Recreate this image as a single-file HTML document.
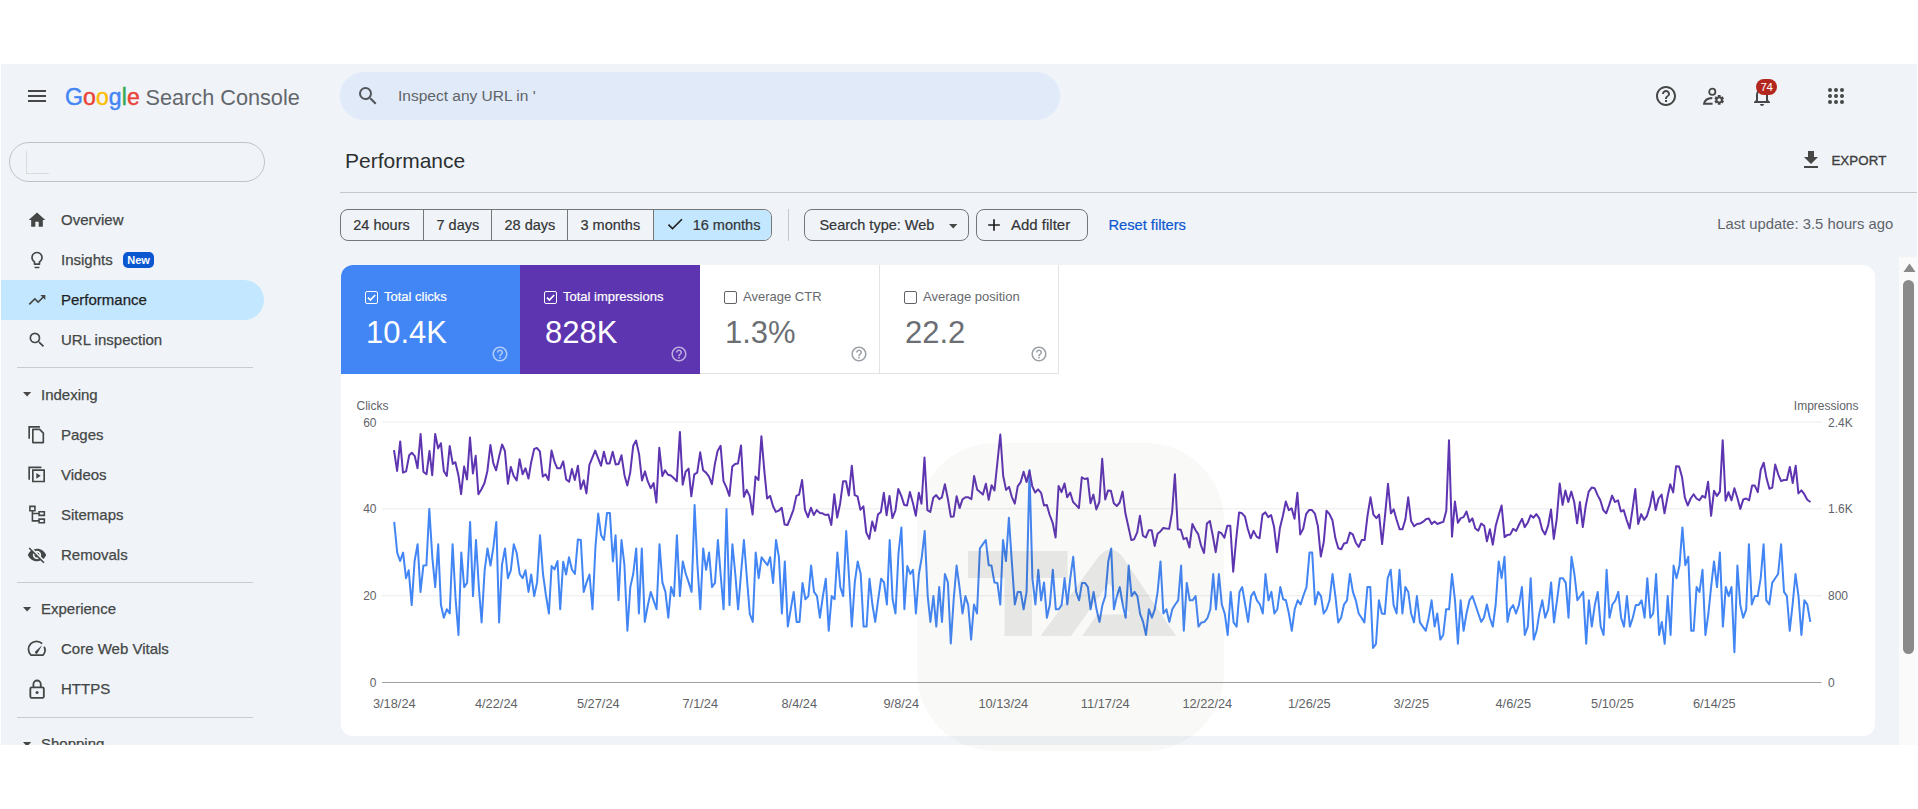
<!DOCTYPE html>
<html><head><meta charset="utf-8">
<style>
*{margin:0;padding:0;box-sizing:border-box}
html,body{width:1918px;height:809px;overflow:hidden;background:#fff;font-family:"Liberation Sans",sans-serif}
#app{position:absolute;left:1px;top:64px;width:1916px;height:681px;background:#f0f4f9;overflow:hidden}
.a{position:absolute;white-space:nowrap}
svg{position:absolute;overflow:visible}
.nav{position:absolute;left:0;height:40px;width:263px;font-size:15px;font-weight:400;color:#444746;line-height:40px;-webkit-text-stroke:0.25px #444746}
.nav .t{position:absolute;left:60px;top:0}
.nav svg{left:26px;top:10px;width:20px;height:20px}
.sec{position:absolute;left:0;height:40px;font-size:15px;font-weight:400;color:#444746;line-height:40px;-webkit-text-stroke:0.25px #444746}
.divd{position:absolute;left:16px;width:236px;height:1px;background:#c9cccd}
.seg{position:absolute;top:145px;height:32px;border:1px solid #747775;border-radius:8px;overflow:hidden;background:#f0f4f9}
.btn{position:absolute;top:145px;height:32px;border:1px solid #747775;border-radius:8px}
.tile{position:absolute;top:201px;height:109px}
.tile .lab{position:absolute;left:43px;top:24px;font-size:13px;line-height:16px;-webkit-text-stroke:0.2px currentColor}
.tile .val{position:absolute;left:25px;top:49.5px;font-size:31px;line-height:36px}
.tile .cb{position:absolute;left:24px;top:26px;width:13px;height:13px;border-radius:2px}
</style></head>
<body>
<div id="app">
  <!-- header -->
  <svg style="left:27px;top:26px" width="18" height="12"><rect x="0" y="0" width="18" height="2" fill="#474747"/><rect x="0" y="5" width="18" height="2" fill="#474747"/><rect x="0" y="10" width="18" height="2" fill="#474747"/></svg>
  <div class="a" style="left:64px;top:18px;font-size:23px;line-height:30px;letter-spacing:0.1px;-webkit-text-stroke:0.45px"><span style="color:#4285f4">G</span><span style="color:#ea4335">o</span><span style="color:#fbbc05">o</span><span style="color:#4285f4">g</span><span style="color:#34a853">l</span><span style="color:#ea4335">e</span></div>
  <div class="a" style="left:144.5px;top:19px;font-size:21.7px;line-height:30px;color:#63676b">Search Console</div>

  <div class="a" style="left:339px;top:8px;width:720px;height:48px;border-radius:24px;background:#e0eaf8"></div>
  <svg style="left:355px;top:20px" width="24" height="24" viewBox="0 0 24 24"><path fill="#53575b" d="M15.5 14h-.79l-.28-.27A6.471 6.471 0 0 0 16 9.5 6.5 6.5 0 1 0 9.5 16c1.61 0 3.09-.59 4.23-1.57l.27.28v.79l5 4.99L20.49 19l-4.99-5zm-6 0C7.01 14 5 11.99 5 9.5S7.01 5 9.5 5 14 7.01 14 9.5 11.99 14 9.5 14z"/></svg>
  <div class="a" style="left:397px;top:22px;font-size:15.5px;line-height:20px;color:#5f6368">Inspect any URL in '</div>

  <!-- right header icons -->
  <svg style="left:1653px;top:20px" width="24" height="24" viewBox="0 0 24 24"><path fill="#474747" d="M11 18h2v-2h-2v2zm1-16C6.48 2 2 6.48 2 12s4.48 10 10 10 10-4.48 10-10S17.52 2 12 2zm0 18c-4.41 0-8-3.590-8-8s3.59-8 8-8 8 3.59 8 8-3.59 8-8 8zm0-14c-2.21 0-4 1.79-4 4h2c0-1.1.9-2 2-2s2 .9 2 2c0 2-3 1.75-3 5h2c0-2.25 3-2.5 3-5 0-2.21-1.79-4-4-4z"/></svg>
  <svg style="left:1699px;top:22px" width="26" height="24" viewBox="0 0 26 24"><circle cx="12.3" cy="5.8" r="3.1" fill="none" stroke="#474747" stroke-width="1.8"/><path d="M12.3 11.9C8 12.1 4.6 14 4.1 17.7H12.6" fill="none" stroke="#474747" stroke-width="2"/><path fill="#474747" fill-rule="evenodd" d="M17.82 9.09 L20.58 9.09 L20.64 10.49 L21.43 10.95 L22.67 10.30 L24.05 12.69 L22.87 13.44 L22.87 14.36 L24.05 15.11 L22.67 17.50 L21.43 16.85 L20.64 17.31 L20.58 18.71 L17.82 18.71 L17.76 17.31 L16.97 16.85 L15.73 17.50 L14.35 15.11 L15.53 14.36 L15.53 13.44 L14.35 12.69 L15.73 10.30 L16.97 10.95 L17.76 10.49Z M20.90 13.90 A1.7 1.7 0 1 0 17.50 13.90 A1.7 1.7 0 1 0 20.90 13.90Z"/></svg>
  <svg style="left:1749px;top:20px" width="24" height="24" viewBox="0 0 24 24"><path fill="#474747" d="M12 22c1.1 0 2-.9 2-2h-4c0 1.1.89 2 2 2zm6-6v-5c0-3.07-1.64-5.64-4.5-6.32V4c0-.83-.67-1.5-1.5-1.5s-1.5.67-1.5 1.5v.68C7.63 5.36 6 7.92 6 11v5l-2 2v1h16v-1l-2-2zm-2 1H8v-6c0-2.48 1.51-4.5 4-4.5s4 2.02 4 4.5v6z"/></svg>
  <div class="a" style="left:1755px;top:14.8px;width:21px;height:16.4px;border-radius:8.2px;background:#b3261e;color:#fff;font-size:11.5px;line-height:16.4px;text-align:center;letter-spacing:-0.3px">74</div>
  <svg style="left:1823px;top:20px" width="24" height="24" viewBox="0 0 24 24"><g fill="#444746"><circle cx="6" cy="6" r="2"/><circle cx="12" cy="6" r="2"/><circle cx="18" cy="6" r="2"/><circle cx="6" cy="12" r="2"/><circle cx="12" cy="12" r="2"/><circle cx="18" cy="12" r="2"/><circle cx="6" cy="18" r="2"/><circle cx="12" cy="18" r="2"/><circle cx="18" cy="18" r="2"/></g></svg>

  <!-- property selector -->
  <div class="a" style="left:8px;top:78px;width:256px;height:40px;border:1px solid #c0c3c2;border-radius:20px"></div>
  <div class="a" style="left:25px;top:86.5px;width:23px;height:23px;border-left:1px solid #dcdcdc;border-bottom:1px solid #dcdcdc"></div>

  <div class="nav" style="top:136.0px"><svg viewBox="0 0 24 24" fill="#444746"><path d="M10 20v-6h4v6h5v-8h3L12 3 2 12h3v8z"/></svg><span class="t">Overview</span></div>
  <div class="nav" style="top:175.6px"><svg viewBox="0 0 24 24" fill="#444746"><path d="M9 21c0 .55.45 1 1 1h4c.55 0 1-.45 1-1v-1H9v1zm3-19C8.14 2 5 5.14 5 9c0 2.38 1.19 4.47 3 5.74V17c0 .55.45 1 1 1h6c.55 0 1-.45 1-1v-2.26c1.81-1.27 3-3.36 3-5.74 0-3.86-3.14-7-7-7zm2.85 11.1l-.85.6V16h-4v-2.3l-.85-.6A4.997 4.997 0 0 1 7 9c0-2.76 2.24-5 5-5s5 2.24 5 5c0 1.63-.8 3.16-2.15 4.1z"/></svg><span class="t">Insights</span></div>
  <div class="a" style="left:122px;top:187.5px;width:31px;height:16.5px;border-radius:5px;background:#0b57d0;color:#fff;font-size:11px;font-weight:700;line-height:17px;text-align:center">New</div>
  <div class="a" style="left:0;top:216.0px;width:263px;height:40px;background:#c2e7ff;border-radius:0 20px 20px 0"></div>
  <div class="nav" style="top:216.0px"><svg viewBox="0 0 24 24" fill="#444746"><path d="M16 6l2.29 2.29-4.88 4.88-4-4L2 16.59 3.41 18l6-6 4 4 6.3-6.29L22 12V6z"/></svg><span class="t" style="color:#1f1f1f;-webkit-text-stroke-color:#1f1f1f">Performance</span></div>
  <div class="nav" style="top:256.0px"><svg viewBox="0 0 24 24" fill="#444746"><path d="M15.5 14h-.79l-.28-.27A6.471 6.471 0 0 0 16 9.5 6.5 6.5 0 1 0 9.5 16c1.61 0 3.09-.59 4.23-1.57l.27.28v.79l5 4.99L20.49 19l-4.99-5zm-6 0C7.01 14 5 11.99 5 9.5S7.01 5 9.5 5 14 7.01 14 9.5 11.99 14 9.5 14z"/></svg><span class="t">URL inspection</span></div>
  <div class="divd" style="top:303px"></div>
  <div class="sec" style="top:310.5px"><svg style="left:21.8px;top:17.5px" width="8" height="5"><path d="M0 0h8.2L4.1 4.6z" fill="#474747"/></svg><span style="position:absolute;left:40px">Indexing</span></div>
  <div class="nav" style="top:350.7px"><svg viewBox="0 0 24 24" fill="#444746"><path fill="none" stroke="#444746" stroke-width="2" d="M2.6 16.5V2.2H15.5"/><path fill="none" stroke="#444746" stroke-width="2" stroke-linejoin="round" d="M7 5.3H15.2L19.6 9.7V21.1H7Z"/></svg><span class="t">Pages</span></div>
  <div class="nav" style="top:390.8px"><svg viewBox="0 0 24 24" fill="#444746"><path fill="none" stroke="#444746" stroke-width="2" d="M2.6 17.8V2.9H17.3"/><path fill="none" stroke="#444746" stroke-width="2" d="M7 6.2H20.6V19.8H7Z"/><path d="M11.2 9.6v6.8l5.2-3.4z"/></svg><span class="t">Videos</span></div>
  <div class="nav" style="top:430.6px"><svg viewBox="0 0 24 24" fill="#444746"><path fill="none" stroke="#444746" stroke-width="1.9" d="M3.5 1.6h6v5.3h-6zM14.5 8.1h6.3v4.3h-6.3zM14.5 17h6.3v4.3h-6.3zM6.5 6.9V19.1h8M6.5 10.2h8"/></svg><span class="t">Sitemaps</span></div>
  <div class="nav" style="top:470.5px"><svg viewBox="0 0 24 24" fill="#444746"><path d="M12 7c2.76 0 5 2.24 5 5 0 .65-.13 1.26-.36 1.83l2.92 2.92c1.51-1.26 2.7-2.89 3.43-4.75-1.73-4.39-6-7.5-11-7.5-1.4 0-2.74.25-3.98.7l2.16 2.16C10.74 7.13 11.35 7 12 7zM2 4.27l2.28 2.28.46.46A11.804 11.804 0 0 0 1 12c1.73 4.39 6 7.5 11 7.5 1.55 0 3.03-.3 4.38-.84l.42.42L19.73 22 21 20.73 3.27 3 2 4.27zM7.53 9.8l1.55 1.55c-.05.21-.08.43-.08.65 0 1.66 1.34 3 3 3 .22 0 .44-.03.65-.08l1.55 1.55c-.67.33-1.41.53-2.2.53-2.76 0-5-2.24-5-5 0-.79.2-1.53.53-2.2zm4.31-.78l3.15 3.15.02-.16c0-1.66-1.34-3-3-3l-.17.01z"/></svg><span class="t">Removals</span></div>
  <div class="divd" style="top:518px"></div>
  <div class="sec" style="top:525.0px"><svg style="left:21.8px;top:17.5px" width="8" height="5"><path d="M0 0h8.2L4.1 4.6z" fill="#474747"/></svg><span style="position:absolute;left:40px">Experience</span></div>
  <div class="nav" style="top:565.4px"><svg viewBox="0 0 24 24" fill="#444746"><path fill="none" stroke="#444746" stroke-width="2.1" stroke-linejoin="round" d="M18.2 5.6A9 9 0 0 0 4.6 19.2H19.4A9 9 0 0 0 20.6 9.3"/><path d="M9.6 15.4l8.7-8.2-5.9 10.3a1.9 1.9 0 0 1-2.8-2.1z"/></svg><span class="t">Core Web Vitals</span></div>
  <div class="nav" style="top:605.0px"><svg viewBox="0 0 24 24" fill="#444746"><rect x="4" y="10" width="16.2" height="12.6" rx="1.6" fill="none" stroke="#444746" stroke-width="2.2"/><path fill="none" stroke="#444746" stroke-width="2.2" d="M7.7 10V6.2a4.4 4.4 0 0 1 8.8 0V10"/><circle cx="12.1" cy="16.2" r="1.8"/></svg><span class="t">HTTPS</span></div>
  <div class="divd" style="top:653px"></div>
  <div class="sec" style="top:660.0px"><svg style="left:21.8px;top:17.5px" width="8" height="5"><path d="M0 0h8.2L4.1 4.6z" fill="#474747"/></svg><span style="position:absolute;left:40px">Shopping</span></div>

  <div class="a" style="left:344.0px;top:84.8px;font-size:21px;line-height:24px;color:#2d2f31">Performance</div>
  <svg style="left:1797.7px;top:84.0px" width="24" height="24" viewBox="0 0 24 24"><path fill="#474747" d="M19 9h-4V3H9v6H5l7 7 7-7zM5 18v2h14v-2H5z"/></svg>
  <div class="a" style="left:1830.4px;top:89px;font-size:13.3px;font-weight:400;line-height:16px;color:#3c3c3c;letter-spacing:0.1px;-webkit-text-stroke:0.35px #3c3c3c">EXPORT</div>
  <div class="a" style="left:339.0px;top:128.0px;width:1578px;height:1px;background:#c7c7c7"></div>
  <div class="seg" style="left:339.0px;width:432px">
  <div class="a" style="left:312.4px;top:0;width:118.4px;height:30px;background:#c2e7ff"></div>
  <div class="a" style="left:81.9px;top:0;width:1px;height:30px;background:#747775"></div>
  <div class="a" style="left:149.7px;top:0;width:1px;height:30px;background:#747775"></div>
  <div class="a" style="left:225.7px;top:0;width:1px;height:30px;background:#747775"></div>
  <div class="a" style="left:311.9px;top:0;width:1px;height:30px;background:#747775"></div>
  </div>
  <div class="a" style="left:352.3px;top:150.8px;font-size:14.5px;line-height:20px;color:#333537;-webkit-text-stroke:0.2px #333537">24 hours</div>
  <div class="a" style="left:435.5px;top:150.8px;font-size:14.5px;line-height:20px;color:#333537;-webkit-text-stroke:0.2px #333537">7 days</div>
  <div class="a" style="left:503.5px;top:150.8px;font-size:14.5px;line-height:20px;color:#333537;-webkit-text-stroke:0.2px #333537">28 days</div>
  <div class="a" style="left:579.5px;top:150.8px;font-size:14.5px;line-height:20px;color:#333537;-webkit-text-stroke:0.2px #333537">3 months</div>
  <div class="a" style="left:691.7px;top:150.8px;font-size:14.5px;line-height:20px;color:#333537;-webkit-text-stroke:0.2px #333537">16 months</div>
  <svg style="left:664.0px;top:150.0px" width="20" height="20" viewBox="0 0 24 24"><path fill="#1f1f1f" d="M9 16.17L4.83 12l-1.42 1.41L9 19 21 7l-1.41-1.41z"/></svg>
  <div class="a" style="left:787.0px;top:145.0px;width:1px;height:32px;background:#c7c7c7"></div>
  <div class="btn" style="left:803.0px;width:165px"></div>
  <div class="a" style="left:818.4px;top:150.8px;font-size:14.5px;line-height:20px;color:#333537;-webkit-text-stroke:0.2px #333537">Search type: Web</div>
  <svg style="left:947.5px;top:159.5px" width="8" height="5"><path d="M0 0h8.4L4.2 4.6z" fill="#474747"/></svg>
  <div class="btn" style="left:975.4px;width:112px"></div>
  <svg style="left:983.0px;top:151.0px" width="20" height="20" viewBox="0 0 24 24"><path fill="#1f1f1f" d="M19 13h-6v6h-2v-6H5v-2h6V5h2v6h6v2z"/></svg>
  <div class="a" style="left:1010.0px;top:150.8px;font-size:15px;line-height:20px;color:#333537;-webkit-text-stroke:0.2px #333537">Add filter</div>
  <div class="a" style="left:1107.4px;top:150.8px;font-size:14.7px;line-height:20px;color:#0b57d0;-webkit-text-stroke:0.2px #0b57d0">Reset filters</div>
  <div class="a" style="left:1716.2px;top:150.4px;font-size:14.8px;line-height:20px;color:#5f6368">Last update: 3.5 hours ago</div>
  <div class="a" style="left:340.0px;top:201.0px;width:1534px;height:471px;background:#fff;border-radius:12px;overflow:hidden">
  <div class="tile" style="left:0.0px;top:0;width:179px;background:#4285f4;">
  <div class="cb" style="border:1.5px solid #fff"></div>
  <svg style="left:24px;top:26px" width="13" height="13" viewBox="0 0 13 13"><path fill="none" stroke="#fff" stroke-width="1.7" d="M3 6.6l2.4 2.4 4.8-5"/></svg>
  <div class="lab" style="color:#fff">Total clicks</div>
  <div class="val" style="color:#fff">10.4K</div>
  <svg style="left:149.5px;top:79.6px" width="18" height="18" viewBox="0 0 24 24"><path fill="rgba(255,255,255,0.6)" d="M11 18h2v-2h-2v2zm1-16C6.48 2 2 6.48 2 12s4.48 10 10 10 10-4.48 10-10S17.52 2 12 2zm0 18c-4.41 0-8-3.59-8-8s3.59-8 8-8 8 3.59 8 8-3.59 8-8 8zm0-14c-2.21 0-4 1.79-4 4h2c0-1.1.9-2 2-2s2 .9 2 2c0 2-3 1.75-3 5h2c0-2.25 3-2.5 3-5 0-2.21-1.79-4-4-4z"/></svg>
  </div>
  <div class="tile" style="left:179.0px;top:0;width:180px;background:#5e35b1;">
  <div class="cb" style="border:1.5px solid #fff"></div>
  <svg style="left:24px;top:26px" width="13" height="13" viewBox="0 0 13 13"><path fill="none" stroke="#fff" stroke-width="1.7" d="M3 6.6l2.4 2.4 4.8-5"/></svg>
  <div class="lab" style="color:#fff">Total impressions</div>
  <div class="val" style="color:#fff">828K</div>
  <svg style="left:149.5px;top:79.6px" width="18" height="18" viewBox="0 0 24 24"><path fill="rgba(255,255,255,0.6)" d="M11 18h2v-2h-2v2zm1-16C6.48 2 2 6.48 2 12s4.48 10 10 10 10-4.48 10-10S17.52 2 12 2zm0 18c-4.41 0-8-3.59-8-8s3.59-8 8-8 8 3.59 8 8-3.59 8-8 8zm0-14c-2.21 0-4 1.79-4 4h2c0-1.1.9-2 2-2s2 .9 2 2c0 2-3 1.75-3 5h2c0-2.25 3-2.5 3-5 0-2.21-1.79-4-4-4z"/></svg>
  </div>
  <div class="tile" style="left:359.0px;top:0;width:180px;background:#fff;border-right:1px solid #e3e3e3;border-bottom:1px solid #e3e3e3;">
  <div class="cb" style="border:1.5px solid #5f6368"></div>
  <div class="lab" style="color:#66696d;-webkit-text-stroke:0">Average CTR</div>
  <div class="val" style="color:#6b6f74">1.3%</div>
  <svg style="left:149.5px;top:79.6px" width="18" height="18" viewBox="0 0 24 24"><path fill="#9aa0a6" d="M11 18h2v-2h-2v2zm1-16C6.48 2 2 6.48 2 12s4.48 10 10 10 10-4.48 10-10S17.52 2 12 2zm0 18c-4.41 0-8-3.59-8-8s3.59-8 8-8 8 3.59 8 8-3.59 8-8 8zm0-14c-2.21 0-4 1.79-4 4h2c0-1.1.9-2 2-2s2 .9 2 2c0 2-3 1.75-3 5h2c0-2.25 3-2.5 3-5 0-2.21-1.79-4-4-4z"/></svg>
  </div>
  <div class="tile" style="left:539.0px;top:0;width:179px;background:#fff;border-right:1px solid #e3e3e3;border-bottom:1px solid #e3e3e3;">
  <div class="cb" style="border:1.5px solid #5f6368"></div>
  <div class="lab" style="color:#66696d;-webkit-text-stroke:0">Average position</div>
  <div class="val" style="color:#6b6f74">22.2</div>
  <svg style="left:149.5px;top:79.6px" width="18" height="18" viewBox="0 0 24 24"><path fill="#9aa0a6" d="M11 18h2v-2h-2v2zm1-16C6.48 2 2 6.48 2 12s4.48 10 10 10 10-4.48 10-10S17.52 2 12 2zm0 18c-4.41 0-8-3.59-8-8s3.59-8 8-8 8 3.59 8 8-3.59 8-8 8zm0-14c-2.21 0-4 1.79-4 4h2c0-1.1.9-2 2-2s2 .9 2 2c0 2-3 1.75-3 5h2c0-2.25 3-2.5 3-5 0-2.21-1.79-4-4-4z"/></svg>
  </div>
  </div>
  <div class="a" style="left:1898.0px;top:193.0px;width:18px;height:488px;background:#fafafa"></div>
  <svg style="left:1901.5px;top:199.0px" width="13" height="10"><path d="M6.5 0.5L12.5 9H0.5z" fill="#8a8a8a"/></svg>
  <div class="a" style="left:1902.0px;top:216.0px;width:11px;height:374px;background:#8a8a8a;border-radius:6px"></div>
</div>
<svg id="chart" style="left:0;top:0" width="1918" height="809" viewBox="0 0 1918 809">
<rect x="382" y="421.5" width="1439.5" height="1" fill="#ececec"/>
<rect x="382" y="508.3" width="1439.5" height="1" fill="#ececec"/>
<rect x="382" y="595.2" width="1439.5" height="1" fill="#ececec"/>
<rect x="382" y="682" width="1439.5" height="1" fill="#a0a0a0"/>
<text x="356.5" y="409.5" font-family="Liberation Sans" font-size="12" fill="#5f6368">Clicks</text>
<text x="1858.5" y="409.5" text-anchor="end" font-family="Liberation Sans" font-size="12" fill="#5f6368">Impressions</text>
<text x="376.5" y="426.7" text-anchor="end" font-family="Liberation Sans" font-size="12" fill="#5f6368">60</text>
<text x="1828" y="426.7" font-family="Liberation Sans" font-size="12" fill="#5f6368">2.4K</text>
<text x="376.5" y="513.3" text-anchor="end" font-family="Liberation Sans" font-size="12" fill="#5f6368">40</text>
<text x="1828" y="513.3" font-family="Liberation Sans" font-size="12" fill="#5f6368">1.6K</text>
<text x="376.5" y="599.9" text-anchor="end" font-family="Liberation Sans" font-size="12" fill="#5f6368">20</text>
<text x="1828" y="599.9" font-family="Liberation Sans" font-size="12" fill="#5f6368">800</text>
<text x="376.5" y="686.6" text-anchor="end" font-family="Liberation Sans" font-size="12" fill="#5f6368">0</text>
<text x="1828" y="686.6" font-family="Liberation Sans" font-size="12" fill="#5f6368">0</text>
<text x="394.3" y="708.3" text-anchor="middle" font-family="Liberation Sans" font-size="12.8" fill="#5f6368">3/18/24</text>
<text x="496.3" y="708.3" text-anchor="middle" font-family="Liberation Sans" font-size="12.8" fill="#5f6368">4/22/24</text>
<text x="598.3" y="708.3" text-anchor="middle" font-family="Liberation Sans" font-size="12.8" fill="#5f6368">5/27/24</text>
<text x="700.3" y="708.3" text-anchor="middle" font-family="Liberation Sans" font-size="12.8" fill="#5f6368">7/1/24</text>
<text x="799.3" y="708.3" text-anchor="middle" font-family="Liberation Sans" font-size="12.8" fill="#5f6368">8/4/24</text>
<text x="901.3" y="708.3" text-anchor="middle" font-family="Liberation Sans" font-size="12.8" fill="#5f6368">9/8/24</text>
<text x="1003.3" y="708.3" text-anchor="middle" font-family="Liberation Sans" font-size="12.8" fill="#5f6368">10/13/24</text>
<text x="1105.3" y="708.3" text-anchor="middle" font-family="Liberation Sans" font-size="12.8" fill="#5f6368">11/17/24</text>
<text x="1207.3" y="708.3" text-anchor="middle" font-family="Liberation Sans" font-size="12.8" fill="#5f6368">12/22/24</text>
<text x="1309.3" y="708.3" text-anchor="middle" font-family="Liberation Sans" font-size="12.8" fill="#5f6368">1/26/25</text>
<text x="1411.3" y="708.3" text-anchor="middle" font-family="Liberation Sans" font-size="12.8" fill="#5f6368">3/2/25</text>
<text x="1513.3" y="708.3" text-anchor="middle" font-family="Liberation Sans" font-size="12.8" fill="#5f6368">4/6/25</text>
<text x="1612.4" y="708.3" text-anchor="middle" font-family="Liberation Sans" font-size="12.8" fill="#5f6368">5/10/25</text>
<text x="1714.3" y="708.3" text-anchor="middle" font-family="Liberation Sans" font-size="12.8" fill="#5f6368">6/14/25</text>
<polyline points="394.2,521.9 397.2,552.6 400.1,561.0 403.1,552.6 406.0,578.2 408.7,570.3 411.7,605.1 414.6,561.0 417.6,544.2 420.5,591.9 423.4,565.6 426.4,565.2 429.3,508.9 432.3,557.2 435.2,587.1 438.2,544.2 440.9,604.5 443.8,617.7 446.8,609.3 449.7,613.5 452.6,544.2 455.6,599.2 458.5,635.0 461.3,552.6 464.2,587.1 467.1,582.9 470.1,521.9 473.0,596.1 476.0,540.0 478.9,587.7 481.6,622.4 484.6,570.9 487.5,548.4 490.5,565.6 493.4,547.1 496.3,521.9 499.1,622.4 502.0,564.6 505.0,548.4 507.9,578.2 510.8,570.3 513.8,544.2 516.7,553.0 519.7,574.0 522.6,578.2 525.5,570.3 528.5,591.9 531.2,574.5 534.2,596.1 537.1,582.4 540.0,535.2 543.0,574.0 545.9,595.0 548.9,613.5 551.6,566.1 554.5,569.4 557.5,561.0 560.2,609.3 563.2,561.8 566.1,574.5 569.0,557.2 572.0,569.8 574.9,574.0 577.9,539.4 580.8,540.0 583.7,591.9 586.6,582.4 589.5,574.5 592.5,609.3 595.4,547.8 598.2,513.5 601.1,535.2 604.0,540.0 607.0,513.1 609.9,513.1 612.9,561.4 615.6,535.2 618.5,600.3 621.5,540.0 624.4,564.6 627.4,630.8 630.3,587.1 633.2,574.0 636.2,548.4 638.9,613.5 641.8,548.4 644.8,621.9 647.7,606.0 650.7,591.9 653.6,600.3 656.6,609.3 659.5,544.2 662.4,582.4 665.4,591.9 668.3,617.7 671.1,587.1 674.0,596.1 676.9,535.2 679.9,596.1 682.8,561.4 685.8,574.0 688.7,582.4 691.6,591.9 694.6,505.1 697.3,563.1 700.3,609.3 703.2,548.4 706.1,569.8 709.1,552.6 712.0,587.1 715.0,582.9 717.9,540.0 720.6,574.0 723.6,609.3 726.5,508.9 729.5,605.1 732.4,544.2 735.3,574.0 738.1,609.3 741.0,574.0 743.9,540.0 746.9,578.2 749.8,613.9 752.8,621.9 755.7,552.6 758.7,578.2 761.6,557.2 764.5,561.4 767.5,565.2 770.1,557.2 773.1,582.9 776.0,540.0 778.9,557.2 781.9,613.5 784.8,561.4 787.8,626.6 790.7,609.7 793.7,591.9 796.6,621.9 799.5,621.9 802.5,582.9 805.4,599.2 808.4,596.1 811.1,565.6 814.0,591.9 817.0,596.1 819.9,617.7 822.9,596.1 825.8,578.7 828.7,630.8 831.7,596.1 834.6,599.2 837.4,552.6 840.3,587.1 843.2,596.1 846.2,531.0 849.1,578.2 851.8,626.6 854.8,582.4 857.7,561.4 860.7,574.0 863.6,626.6 866.6,626.6 869.5,578.7 872.4,604.5 875.2,621.9 878.1,600.3 881.1,578.7 884.0,582.4 886.9,604.5 889.7,540.0 892.6,599.2 895.5,613.5 898.5,553.0 901.4,527.4 904.4,609.3 907.3,566.1 910.3,574.0 913.0,569.8 915.9,613.5 918.9,574.0 921.8,557.2 924.7,531.0 927.7,596.1 930.4,621.9 933.4,596.1 936.3,626.6 939.2,587.1 942.0,621.9 944.9,574.0 947.9,582.4 950.8,643.4 953.7,599.2 956.6,565.6 959.5,587.1 962.5,613.5 965.4,596.1 968.2,605.1 971.1,639.6 974.0,604.5 977.0,613.5 979.9,548.4 982.9,544.2 985.8,540.0 988.7,565.2 991.5,565.6 994.4,582.4 997.4,582.9 1000.3,604.5 1003.0,540.0 1006.0,561.0 1008.9,517.7 1011.8,561.4 1014.8,604.5 1017.7,591.9 1020.7,591.9 1023.6,609.3 1026.6,591.9 1029.5,470.0 1032.4,578.2 1035.4,604.5 1038.3,569.8 1041.1,600.3 1044.0,582.4 1046.9,617.7 1049.9,604.5 1052.8,569.8 1055.8,609.3 1058.7,609.3 1061.6,605.1 1064.6,578.2 1067.3,604.5 1070.3,578.2 1073.2,556.8 1076.1,591.9 1079.1,600.3 1082.0,582.9 1085.0,582.9 1087.9,587.1 1090.6,609.3 1093.6,591.9 1096.5,609.3 1099.5,621.9 1102.4,605.1 1105.3,596.1 1108.3,561.4 1111.2,548.4 1113.9,609.3 1116.9,596.1 1119.8,587.1 1122.8,605.1 1125.7,617.7 1128.7,565.6 1131.6,596.1 1134.5,591.9 1137.4,596.1 1140.1,613.9 1143.1,621.9 1146.0,635.0 1148.9,609.3 1151.9,617.7 1154.8,609.3 1157.6,591.9 1160.5,561.4 1163.4,613.5 1166.4,609.3 1169.3,621.9 1172.3,609.3 1175.2,604.5 1178.2,600.3 1181.1,565.6 1183.8,630.8 1186.8,582.9 1189.7,600.3 1192.6,600.3 1195.6,596.1 1198.5,626.6 1201.5,622.4 1204.4,621.9 1207.4,618.2 1210.3,609.3 1213.2,574.0 1216.0,609.3 1218.9,574.0 1221.8,604.5 1224.8,613.9 1227.7,635.0 1230.7,591.9 1233.6,622.4 1236.6,626.6 1239.5,591.9 1242.2,587.1 1245.2,604.5 1248.1,621.9 1251.1,596.1 1254.0,591.9 1256.9,600.3 1259.9,604.5 1262.8,613.5 1265.5,574.0 1268.5,600.3 1271.4,591.9 1274.4,613.5 1277.3,609.3 1280.3,587.1 1283.2,599.2 1285.9,600.3 1288.9,613.5 1291.8,630.8 1294.7,609.3 1297.7,600.3 1300.6,604.5 1303.6,595.0 1306.5,587.1 1309.5,552.6 1312.2,552.6 1315.1,604.5 1318.1,591.9 1321.0,596.1 1323.7,613.5 1326.6,609.3 1329.5,600.3 1332.5,574.0 1335.4,596.1 1338.2,622.4 1341.1,617.7 1344.0,604.5 1347.0,600.3 1349.9,574.0 1352.9,591.9 1355.8,600.3 1358.7,613.5 1361.5,617.7 1364.4,622.4 1367.4,587.1 1370.3,587.1 1373.0,648.0 1376.0,643.8 1378.9,600.3 1381.8,613.5 1384.8,613.9 1387.7,578.2 1390.7,569.8 1393.6,605.1 1396.6,613.5 1399.5,569.8 1402.4,613.5 1405.4,587.1 1408.3,591.9 1411.1,613.5 1414.0,622.4 1416.9,596.1 1419.9,622.4 1422.8,626.6 1425.8,630.8 1428.7,617.7 1431.6,600.3 1434.6,626.6 1437.3,613.5 1440.3,639.6 1443.2,635.0 1446.1,609.3 1449.1,609.3 1452.0,574.0 1455.0,600.3 1457.9,643.8 1460.6,600.3 1463.6,630.8 1466.5,613.5 1469.5,600.3 1472.4,596.1 1475.3,604.5 1478.3,613.5 1481.2,621.9 1483.9,617.7 1486.9,604.5 1489.8,617.7 1492.8,626.6 1495.7,604.5 1498.7,561.4 1501.6,578.2 1504.5,556.8 1507.5,621.9 1510.1,609.3 1513.1,605.1 1516.0,613.5 1518.9,605.1 1521.9,587.1 1524.8,635.0 1527.8,626.6 1530.7,578.2 1533.7,639.6 1536.6,630.8 1539.3,613.5 1542.3,600.3 1545.2,617.7 1548.2,609.3 1551.1,582.4 1554.0,622.4 1557.0,600.3 1559.9,578.2 1562.9,578.2 1565.8,582.9 1568.5,617.7 1571.5,556.8 1574.4,574.0 1577.4,600.3 1580.3,596.1 1583.2,591.9 1586.2,643.8 1588.9,600.3 1591.8,626.6 1594.8,605.1 1597.7,591.9 1600.7,626.6 1603.6,635.0 1606.6,569.8 1609.5,617.7 1612.4,604.5 1615.4,600.3 1618.3,591.9 1621.1,617.7 1624.0,626.6 1626.9,596.1 1629.9,626.6 1632.8,617.7 1635.8,605.1 1638.7,605.1 1641.6,600.3 1644.6,617.7 1647.3,578.2 1650.3,617.7 1653.2,613.5 1656.1,574.0 1659.1,635.0 1661.8,621.9 1664.7,643.8 1667.7,596.1 1670.6,635.0 1673.6,565.6 1676.5,578.2 1679.5,565.6 1682.4,527.4 1685.3,565.2 1688.3,556.8 1691.2,630.8 1693.7,630.8 1696.6,587.1 1699.5,591.9 1702.5,569.8 1705.4,635.0 1708.4,613.5 1711.1,587.1 1714.0,561.4 1717.0,587.1 1719.9,552.6 1722.9,626.6 1725.8,587.1 1728.7,596.1 1731.5,587.1 1734.4,652.2 1737.4,565.6 1740.3,605.1 1743.2,617.7 1746.2,609.3 1748.9,544.2 1751.8,604.5 1754.8,596.1 1757.7,596.1 1760.7,578.2 1763.6,544.2 1766.3,600.3 1769.3,604.5 1772.2,582.9 1775.2,578.2 1778.1,574.0 1781.1,544.2 1784.0,591.9 1786.9,596.1 1789.7,630.8 1792.6,604.5 1795.5,574.0 1798.5,596.1 1801.4,635.0 1804.4,600.3 1807.3,604.5 1810.3,621.9" fill="none" stroke="#4285f4" stroke-width="2" stroke-linejoin="round"/>
<polyline points="394.0,450.1 397.1,470.9 400.2,441.4 403.0,472.6 406.1,471.4 409.2,455.3 411.8,452.7 414.8,456.1 417.5,468.3 420.6,434.0 423.4,471.7 426.5,474.3 429.5,451.0 432.2,475.2 435.2,434.0 438.1,448.4 440.9,443.2 443.8,470.9 446.8,476.0 449.7,446.1 452.8,463.9 455.4,462.2 458.4,475.2 461.1,494.2 464.1,466.5 467.0,479.5 470.0,437.5 472.9,473.5 475.7,455.8 478.4,494.2 481.6,489.0 484.5,483.0 487.4,470.9 490.4,444.9 493.3,463.1 496.1,470.3 499.2,456.1 502.1,444.4 504.9,451.0 507.9,483.8 510.8,466.9 513.7,476.0 516.7,480.4 519.6,459.3 522.6,474.3 525.5,468.3 528.5,478.6 531.2,462.2 534.2,448.9 536.9,448.0 539.9,451.3 542.8,476.6 545.6,474.3 548.5,480.0 551.5,450.6 554.6,462.2 557.3,468.3 560.3,468.3 563.2,461.3 566.2,479.5 569.1,481.8 571.9,469.1 574.8,480.0 577.9,465.7 580.7,489.0 583.7,480.4 586.4,493.4 589.4,464.8 595.2,450.6 601.0,465.7 603.9,451.8 606.8,463.4 609.6,463.4 612.7,451.8 615.7,464.5 618.6,463.9 621.5,455.3 624.5,475.2 627.3,485.6 630.2,472.6 633.2,445.8 636.1,440.6 639.1,454.4 642.0,480.4 645.0,471.4 647.7,481.2 650.7,488.2 653.6,483.0 656.4,502.5 659.3,447.8 662.3,476.0 665.0,470.3 668.0,474.8 670.9,475.5 673.9,478.3 676.8,481.2 679.9,431.9 682.7,484.7 685.6,471.7 688.6,468.6 691.3,496.3 694.3,474.3 697.2,472.6 700.2,452.3 703.1,470.3 706.0,472.6 709.0,476.6 711.9,484.2 714.9,463.9 717.6,451.0 720.6,445.8 723.5,481.2 726.5,487.6 729.4,495.9 732.3,466.5 735.1,463.9 738.0,463.4 741.0,445.4 743.9,496.8 746.7,489.9 749.6,495.9 752.6,514.6 755.5,476.6 758.5,480.0 761.4,436.2 764.4,471.7 767.1,498.5 770.1,495.9 773.0,506.0 775.8,511.9 778.7,510.7 781.7,507.7 784.6,524.5 787.5,525.0 790.5,517.6 793.4,509.8 796.4,495.9 799.1,494.6 802.1,480.0 805.0,509.8 808.0,517.1 810.9,507.7 813.8,515.0 816.8,510.1 819.7,512.9 822.5,513.3 825.4,515.0 828.4,514.6 831.3,525.0 834.3,494.2 837.2,517.6 840.1,503.7 843.1,481.2 846.0,481.2 848.8,495.6 851.8,465.7 854.7,495.1 857.5,496.3 860.4,509.8 863.4,506.3 866.3,532.6 869.3,538.9 872.2,521.6 875.1,530.9 877.9,514.6 880.9,511.9 883.8,492.8 886.6,515.3 889.5,495.9 892.4,518.1 895.4,510.7 898.3,489.0 901.3,495.9 904.2,504.9 907.0,505.5 909.9,492.1 912.9,502.9 915.8,515.8 918.8,492.8 921.5,503.7 924.5,457.5 927.4,510.1 930.3,511.9 933.3,497.7 936.2,495.1 939.2,499.1 941.9,497.3 944.9,484.2 947.8,498.5 950.8,516.7 953.7,516.4 956.6,496.3 959.6,508.1 962.5,499.4 965.5,497.3 968.4,497.3 971.4,499.1 974.1,476.0 977.1,489.4 980.0,492.1 982.9,494.6 985.9,483.8 988.7,499.8 991.6,485.2 994.5,490.4 1000.3,434.5 1003.2,476.0 1006.1,489.9 1009.1,486.9 1011.8,496.8 1014.8,503.7 1017.7,486.4 1020.7,482.1 1023.6,471.7 1026.6,482.1 1029.5,470.9 1032.3,486.4 1035.2,492.5 1038.1,489.4 1041.1,492.8 1044.0,505.5 1046.8,504.9 1049.7,515.0 1052.7,522.8 1055.6,537.5 1058.6,485.9 1061.5,492.1 1064.5,483.5 1067.2,497.3 1070.2,492.5 1073.1,502.0 1075.9,504.9 1078.9,508.1 1081.8,477.3 1084.7,479.0 1087.7,478.3 1090.5,503.2 1093.4,494.6 1096.3,509.4 1099.3,502.0 1102.2,458.7 1105.2,499.4 1108.1,490.4 1110.9,490.8 1113.8,503.2 1116.8,506.0 1119.7,502.5 1122.6,491.6 1125.4,513.3 1128.4,526.7 1131.3,540.1 1134.2,539.2 1137.2,532.3 1139.9,515.8 1142.9,535.7 1145.8,537.5 1148.8,530.2 1151.7,530.2 1154.7,546.1 1157.6,533.7 1160.4,531.4 1163.3,528.0 1166.2,528.5 1169.2,528.8 1172.1,512.4 1174.9,474.3 1177.8,529.2 1180.8,529.7 1183.6,539.2 1186.5,537.8 1189.4,547.5 1192.4,524.0 1195.3,529.7 1198.3,534.4 1201.0,545.3 1204.0,553.0 1206.9,523.6 1209.9,521.0 1212.8,535.7 1215.7,552.2 1218.7,531.9 1221.4,533.2 1224.4,537.8 1227.3,525.7 1230.3,525.7 1233.2,571.7 1236.2,539.2 1239.1,512.4 1242.0,513.3 1245.0,516.7 1247.7,528.5 1250.7,538.3 1253.6,530.9 1256.6,536.6 1259.5,538.3 1262.5,514.6 1265.4,512.4 1268.2,517.1 1271.1,515.0 1274.1,527.1 1277.0,552.2 1279.9,528.0 1282.9,515.8 1285.8,501.5 1288.8,510.1 1291.7,508.4 1294.5,518.8 1297.4,492.8 1300.2,534.4 1303.2,528.8 1306.1,514.1 1309.1,510.1 1312.0,510.1 1314.9,513.6 1317.9,526.2 1320.8,556.5 1323.8,541.8 1326.5,510.7 1329.5,514.1 1332.4,520.2 1335.4,538.3 1338.3,548.2 1341.2,549.2 1344.0,543.5 1346.9,542.7 1349.9,532.6 1352.8,534.4 1355.8,542.7 1358.7,547.0 1361.7,540.1 1364.6,540.1 1367.5,515.8 1370.5,497.3 1373.4,514.6 1376.4,518.1 1379.1,514.6 1382.1,544.1 1385.0,515.8 1388.0,483.8 1390.9,513.3 1393.7,509.4 1396.6,519.8 1399.6,529.2 1402.5,529.2 1405.4,519.3 1408.2,497.3 1411.1,521.0 1414.1,526.2 1417.0,524.0 1420.0,523.6 1422.9,521.9 1425.9,519.3 1428.8,518.4 1431.7,524.0 1434.5,521.6 1437.4,524.0 1440.4,522.8 1443.3,521.9 1446.3,510.7 1449.0,440.2 1452.0,536.6 1454.9,501.5 1457.9,522.8 1460.8,518.1 1463.6,517.1 1466.5,511.5 1469.5,521.9 1472.4,518.4 1475.3,528.5 1478.3,530.6 1481.2,523.6 1484.2,525.7 1486.9,541.3 1489.9,529.2 1492.8,544.7 1495.8,525.4 1498.7,515.0 1501.6,505.5 1504.6,537.1 1507.4,534.9 1510.3,534.4 1513.2,528.8 1516.2,530.9 1519.1,524.5 1522.1,518.8 1524.7,527.1 1527.7,522.8 1530.6,515.3 1533.5,517.6 1536.3,514.1 1539.2,518.1 1542.2,529.7 1545.1,534.4 1548.1,525.7 1551.0,509.4 1553.8,538.9 1556.7,519.3 1559.7,483.5 1562.6,504.9 1565.4,490.4 1568.3,502.0 1571.3,491.6 1574.2,502.0 1577.1,523.3 1579.9,502.0 1582.8,527.1 1585.8,505.5 1588.7,491.6 1591.7,487.6 1594.6,488.2 1597.6,495.1 1600.3,500.3 1603.3,510.1 1606.2,513.3 1609.2,504.9 1612.1,495.6 1615.0,502.0 1618.0,500.3 1620.9,511.5 1623.7,510.1 1626.6,519.8 1629.6,528.5 1632.5,509.4 1635.3,489.0 1638.2,524.0 1641.2,514.1 1644.1,519.8 1647.0,515.8 1650.0,505.5 1652.8,491.6 1655.7,510.1 1658.6,498.5 1661.6,494.6 1664.5,513.3 1667.5,496.8 1670.2,484.2 1673.2,492.5 1676.1,466.2 1679.1,466.5 1682.0,476.9 1684.8,497.3 1687.7,505.5 1690.7,498.5 1693.6,494.2 1696.5,498.5 1699.5,500.3 1702.4,495.9 1705.2,497.7 1708.1,481.8 1711.1,515.8 1714.0,490.8 1717.0,495.9 1719.9,491.6 1722.7,440.2 1725.6,500.8 1728.5,492.1 1731.5,500.3 1734.4,488.2 1737.4,498.0 1740.3,508.9 1743.3,499.4 1746.2,498.5 1749.1,500.3 1752.1,485.6 1754.8,485.6 1757.8,492.1 1760.7,470.0 1763.7,462.7 1766.6,478.6 1769.4,488.7 1772.3,487.6 1775.2,464.5 1778.2,474.3 1781.1,481.2 1783.9,480.0 1786.8,480.0 1789.8,466.9 1792.7,483.0 1795.7,465.7 1798.4,493.4 1801.4,490.4 1804.3,494.2 1807.3,499.8 1810.5,502.0" fill="none" stroke="#5e35b1" stroke-width="2" stroke-linejoin="round"/>
<g opacity="1">
<rect x="917" y="443" width="307" height="308" rx="78" fill="rgba(120,110,80,0.045)"/>
<path fill="rgba(0,0,0,0.075)" d="M968 551H1067.5V578H1032V636H1004.5V578H968Z"/>
<path fill="rgba(0,0,0,0.075)" fill-rule="evenodd" d="M1040.5 636L1099 556Q1110.5 543 1122 556L1176 636ZM1071 636L1109 583L1130 614.6H1097L1082 636Z"/>
</g>
</svg>
</body></html>
